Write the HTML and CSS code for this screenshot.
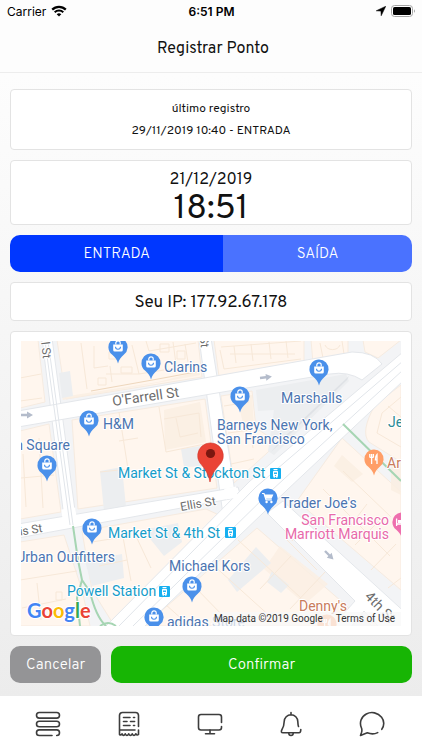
FILE: index.html
```
<!doctype html>
<html lang="pt-BR">
<head>
    <title>Registrar Ponto</title>
    <meta charset="utf-8"/>
    <meta name="viewport" content="width=device-width, initial-scale=1">
    <link rel="stylesheet" href="styles.css">
</head>
<body>
    <div class="statusbar">
        <div class="carrier">
            <span>Carrier</span>
            <svg width="16" height="12" viewBox="0 0 16 12">
                <path d="M1.2 4.6 A9.6 9.6 0 0 1 14.8 4.6" fill="none" stroke="#000" stroke-width="2.2"/>
                <path d="M3.7 7.2 A6.1 6.1 0 0 1 12.3 7.2" fill="none" stroke="#000" stroke-width="2"/>
                <path d="M5.7 9.3 A3.3 3.3 0 0 1 10.3 9.3 L8 11.6 Z"/>
            </svg>
        </div>
        <div class="clock">6:51 PM</div>
        <div class="power">
            <svg width="10" height="10" viewBox="0 0 10 10"><path d="M9.8 .2 L.2 4.8 L4.9 5.1 L5.2 9.8 Z" stroke="#000" stroke-width=".5"/></svg>
            <svg width="25" height="12" viewBox="0 0 25 12">
                <rect x=".5" y=".5" width="21" height="11" rx="3" fill="#fff" stroke="#a5a5a5"/>
                <rect x="2" y="2" width="18" height="8" rx="1.6"/>
                <path d="M23 4.2 q2 1.8 0 3.6 z" fill="#a5a5a5"/>
            </svg>
        </div>
    </div>
    <header class="header">
        <h1>Registrar Ponto</h1>
    </header>

    <main class="content">
        <section class="card last">
            <p>último registro</p>
            <p>29/11/2019 10:40 - ENTRADA</p>
        </section>
        <section class="card now">
            <p class="date">21/12/2019</p>
            <p class="time">18:51</p>
        </section>
        <div class="segment">
            <button type="button" class="on">ENTRADA</button>
            <button type="button">SAÍDA</button>
        </div>
        <section class="card ip">Seu IP: 177.92.67.178</section>
        <section class="card mapcard">
            <div class="map">
                <svg class="mapsvg" viewBox="21 341 380 285" preserveAspectRatio="xMidYMid slice">
                    <defs>
                        <path id="drop" d="M0 16.5 C-1 12.5 -3 10.5 -6 7.6 A9.6 9.6 0 1 1 6 7.6 C3 10.5 1 12.5 0 16.5 Z"/>
                        <g id="shop">
                            <use href="#drop" fill="#4a90ea"/>
                            <path d="M-4.8 -2.6 H4.8 V3 a1.6 1.6 0 0 1 -1.6 1.6 H-3.2 A1.6 1.6 0 0 1 -4.8 3 Z" fill="#fff"/>
                            <path d="M-2.2 -2.6 V-4 a2.2 2.2 0 0 1 4.4 0 V-2.6" fill="none" stroke="#fff" stroke-width="1.2"/>
                            <path d="M-2.5 -.2 a2.5 2.5 0 0 0 5 0" fill="none" stroke="#4a90ea" stroke-width="1.1"/>
                        </g>
                        <g id="food">
                            <use href="#drop" fill="#ff9e67"/>
                            <path d="M-4.2 -5 V-1.5 M-2.4 -5 V5 M-.6 -5 V-1.5 M-4.2 -1.6 H-.6 M3 5 V-4.6 Q1.2 -3 1.4 .8 H3" fill="none" stroke="#fff" stroke-width="1.3"/>
                        </g>
                        <g id="tram">
                            <rect width="11" height="11" rx="1" fill="#16aff0"/>
                            <rect x="3" y="2.8" width="5" height="6.2" rx="1" fill="#fff"/>
                            <path d="M3.5 1.5 H7.5 M3.8 10 L4.6 9 M7.2 10 L6.4 9" stroke="#fff" stroke-width="1"/>
                            <path d="M4 5.2 H7" stroke="#16aff0" stroke-width="1.4"/>
                            <circle cx="5.5" cy="7.6" r=".6" fill="#16aff0"/>
                        </g>
                        <path id="arrow" d="M0 -1.2 H6 V-3.4 L12 0 L6 3.4 V1.2 H0 Z" fill="#b4bccb"/>
                    </defs>
                    <rect x="21" y="341" width="380" height="285" fill="#f3f4f6"/>

                    <!-- city blocks -->
                    <g fill="#fff6ee" stroke="#f6ebe0" stroke-width="1">
                        <path d="M20 340 H38 L45 402 L20 408 Z"/>
                        <path d="M57 340 H198 L202 377 L66 399 Z"/>
                        <path d="M20 431 L49 424 L61 512 L20 519 Z"/>
                        <path d="M72 420 L205 399 L217 488 L78 509 Z"/>
                        <path d="M214 340 H304 V364 L219 376 Z"/>
                        <path d="M311 340 H348 V357 L313 363 Z"/>
                        <path d="M363 340 H401 L378 358 L365 352 Z"/>
                        <path d="M221 396 L252 391 L256 428 L278 443 L234 483 Z"/>
                        <path d="M20 542 L64 535 L82 590 L90 626 H20 Z"/>
                        <path d="M82 531 L206 509 L219 515 L112 622 L92 590 Z"/>
                        <path d="M401 385 L375 405 Q360 432 369 442 L401 462 Z"/>
                        <path d="M342 438 L401 492 V590 L297 501 Z"/>
                        <path d="M257 528 L349 608 L338 626 H144 Z"/>
                        <path d="M372 626 L362 616 L380 626 Z"/>
                    </g>
                    <g fill="#fbefe2" opacity=".8">
                        <path d="M62 397 L158 382 L200 371 V375 L63 400 Z"/>
                        <path d="M164 410 L200 402 L206 442 L165 450 Z"/>
                        <path d="M237 397 L252 395 L254 426 L244 428 Z"/>
                        <path d="M391 465 V490 L401 495 V461 Z"/>
                        <path d="M342 455 L363 474 L352 482 L334 466 Z"/>
                        <path d="M280 546 L328 584 L305 604 L264 569 Z"/>
                    </g>
                    <g fill="#eceef0">
                        <path d="M59 373 L70 371 L73 396 L62 398 Z"/>
                        <path d="M100 471 L122 467 L126 507 L104 511 Z"/>
                        <path d="M181 449 L207 445 L210 466 L184 467 Z"/>
                        <path d="M256 390 L346 374 L349 381 L274 455 L268 451 L274 410 L258 411 Z"/>
                        <path d="M143 530 L178 523 L182 542 L164 556 Z"/>
                        <path d="M85 561 L122 554 L124 578 L92 586 Z"/>
                        <path d="M256 547 L271 563 L237 592 L228 580 Z"/>
                        <path d="M272 571 L289 585 L281 593 L267 582 Z"/>
                    </g>
                    <!-- building outlines -->
                    <g fill="none" stroke="#f7e8d8" stroke-width="1">
                        <path d="M81 343 L87 389 M20 378 L41 374 M20 401 L42 398 M94 346 V368 L108 366 M106 374 H139 L164 370 L197 366 M110 366 L112 382 M132 345 L139 374 M146 341 L149 351 L196 343 M173 342 L176 364 M185 344 L188 362"/>
                        <path d="M160 344 h9 v8 h-9 z M177 351 h8 v8 h-8 z M109 352 h8 v7 h-8 z M121 367 h11 v6 h-11 z M98 378 h8 v7 h-8 z"/>
                        <path d="M119 412 L128 469 L100 472 M119 441 L138 438 M159 407 L166 452 L205 444 M164 419 L199 413 L201 437 M176 418 l4 19 l18 -4"/>
                        <path d="M221 347 L301 341 M220 350 L224 369 L301 359 M234 346 l2 17 M251 344 l2 17 M269 342 l2 17 M286 341 l2 17 M230 354 h65"/>
                        <path d="M320 343 L323 358 L344 354 L342 341 M325 345 a8 7 0 0 0 15 0"/>
                        <path d="M224 406 L249 402 M228 433 L250 430 L253 448 M231 464 L254 459"/>
                        <path d="M23 454 L26 507 M21 478 L54 475 M39 438 L43 508 M92 542 L123 537 L131 581 M99 566 L127 560 M134 532 L151 568"/>
                        <path d="M20 580 L77 571 M37 583 L41 620 M22 608 L66 599 M56 592 h6 v8 h-6 z"/>
                        <path d="M238 540 L301 598 M211 563 L273 619 M190 582 L228 621 M165 604 L184 621 M326 571 L290 609 M291 556 L260 589 M287 540 L317 570 M306 523 L292 541"/>
                        <path d="M343 471 L391 517 M323 489 L390 556 M367 504 L348 529 M380 520 L355 545 M396 544 L371 570 M401 578 L388 588"/>
                        <path d="M401 397 L382 413 L377 433 L401 447 M388 406 L401 417"/>
                    </g>
                    <path d="M91 391 L158 379 L201 371" fill="none" stroke="#eed7bd" stroke-width="1"/>

                    <!-- streets -->
                    <g fill="#fff" stroke="#e4e7eb" stroke-width="1">
                        <path d="M42 338 H52 L76 518 H64 Z"/>
                        <path d="M199 338 H211 L237 505 L223 515 Z"/>
                        <path d="M18 524 L238 487 L241 497 L18 538 Z"/>
                        <path d="M18 411 L312 359 L352 352 Q374 352 382 364 L362 380 Q348 371 330 374 L205 395 L18 427 Z"/>
                        <path d="M283 501 L267 513 L355 601 L331 628 H350 L364 611 L380 628 H410 V617 Z"/>
                        <path d="M403 352 L250 481 L104 628 H143 L287 490 L403 381 Z"/>
                    </g>
                    <path d="M18 419 L66 411 L205 387 L310 367 M62 515 L76 513 M225 494 L237 492" fill="none" stroke="#fff" stroke-width="11"/>
                    <g fill="none" stroke="#e1e5ea" stroke-width="1">
                        <path d="M45 341 L70 525 M48 341 L73 525"/>
                        <path d="M403 361 L256 487 L119 626 M403 370 L272 490 L133 626"/>
                    </g>
                    <path d="M349 376 L283 438 L271 452 L347 380 Z" fill="#dfe2e6"/>
                    <g fill="none" stroke="#a6d5b3" stroke-width="2">
                        <path d="M73 526 L78 560 L82 580 L77 598 L80 626 M82 580 L90 592 Q96 617 106 626 M100 626 Q108 620 116 626"/>
                        <path d="M343 424 L401 481"/>
                    </g>
                    <use href="#arrow" x="21" y="415"/>
                    <use href="#arrow" transform="translate(260 378) rotate(-7)"/>
                    <use href="#arrow" transform="translate(325 551) rotate(45)"/>

                    <g class="street">
                        <text class="main" transform="translate(113 406) rotate(-8)">O'Farrell St</text>
                        <text transform="translate(181 511) rotate(-10)">Ellis St</text>
                        <text transform="translate(43 532) rotate(-9)" text-anchor="end">Ellis St</text>
                        <text transform="translate(43 359) rotate(83)" text-anchor="end">Powell St</text>
                        <text transform="translate(201 348) rotate(83)" text-anchor="end">Stockton St</text>
                        <text class="main" transform="translate(364 597) rotate(46)">4th St</text>
                    </g>

                    <use href="#shop" x="118" y="347"/>
                    <use href="#shop" x="151" y="363"/>
                    <use href="#shop" x="89" y="420"/>
                    <use href="#shop" x="47" y="465"/>
                    <use href="#shop" x="319" y="369"/>
                    <use href="#shop" x="240" y="396"/>
                    <use href="#shop" x="92" y="528"/>
                    <use href="#shop" x="192" y="586"/>
                    <use href="#shop" x="154" y="617"/>
                    <use href="#food" x="374" y="459"/>
                    <use href="#food" x="327" y="624"/>
                    <g transform="translate(268 498)">
                        <use href="#drop" fill="#4a90ea"/>
                        <path d="M-6 -4.5 H-4 L-2 1.8 H3.8" fill="none" stroke="#fff" stroke-width="1.2"/>
                        <path d="M-3.8 -3.6 H5.4 L3.6 .8 H-2.4 Z" fill="#fff"/>
                        <circle cx="-1.4" cy="4" r="1.2" fill="#fff"/>
                        <circle cx="3.4" cy="4" r="1.2" fill="#fff"/>
                    </g>
                    <g transform="translate(402 522)">
                        <use href="#drop" fill="#ee6fae"/>
                        <path d="M-5.4 -3.5 V4 M-5.4 2 H6" stroke="#fff" stroke-width="1.3"/>
                        <path d="M-4 -2 H-1 V1 H-4 Z M0 -2.5 H6 V1 H0 Z" fill="#fff"/>
                    </g>

                    <g class="place">
                        <text x="164" y="372">Clarins</text>
                        <text x="103" y="429">H&amp;M</text>
                        <text x="70" y="450" text-anchor="end">Union Square</text>
                        <text x="281" y="403">Marshalls</text>
                        <text x="217" y="430">Barneys New York,</text>
                        <text x="217" y="444">San Francisco</text>
                        <text x="281" y="508">Trader Joe's</text>
                        <text x="115" y="562" text-anchor="end">Urban Outfitters</text>
                        <text x="169" y="571">Michael Kors</text>
                        <text x="167" y="627">adidas Store</text>
                        <text class="teal" x="388" y="427">Jessica</text>
                        <text class="brown" x="387" y="468">Arts Cafe</text>
                        <text class="brown" x="299" y="611">Denny's</text>
                        <text class="pink" x="389" y="525" text-anchor="end">San Francisco</text>
                        <text class="pink" x="389" y="539" text-anchor="end">Marriott Marquis</text>
                        <text class="transit" x="118" y="478">Market St &amp; Stockton St</text>
                        <text class="transit" x="108" y="538">Market St &amp; 4th St</text>
                        <text class="transit" x="67" y="596">Powell Station</text>
                    </g>
                    <use href="#tram" x="270" y="468"/>
                    <use href="#tram" x="225" y="527"/>
                    <use href="#tram" x="159" y="586"/>

                    <path d="M210 482 C208 472 204 468 200 463 A12.8 12.8 0 1 1 221 463 C217 468 212 472 210 482 Z" fill="#ea4335" stroke="#d0392d" stroke-width=".6"/>
                    <circle cx="210.500" cy="453.500" r="4.6" fill="#7a1710"/>

                    <text class="google" x="27" y="618"><tspan fill="#4285f4">G</tspan><tspan fill="#ea4335">o</tspan><tspan fill="#fbbc05">o</tspan><tspan fill="#4285f4">g</tspan><tspan fill="#34a853">l</tspan><tspan fill="#ea4335">e</tspan></text>
                </svg>
                <div class="credits">
                    <span>Map data ©2019 Google</span>
                    <a href="#">Terms of Use</a>
                </div>
            </div>
        </section>
        <div class="actions">
            <button type="button" class="cancel">Cancelar</button>
            <button type="button" class="confirm">Confirmar</button>
        </div>
    </main>

    <nav class="tabs">
        <a href="#" aria-label="Menu">
            <svg viewBox="0 0 26 26">
                <rect x="1.500" y="1.500" width="23" height="5.600" rx="2.800"/>
                <rect x="1.500" y="10.200" width="23" height="5.600" rx="2.800"/>
                <path d="M17 24.500 H4.300 A2.800 2.800 0 0 1 4.300 18.900 H21.700 A2.800 2.800 0 0 1 21.700 24.500"/>
            </svg>
        </a>
        <a href="#" aria-label="Recibos">
            <svg viewBox="0 0 26 26">
                <path d="M22.500 15.500 V4.500 A3 3 0 0 0 19.500 1.500 H6.500 A3 3 0 0 0 3.500 4.500 V23.500 Q5 24.600 6 22.800 Q7.500 26 9.200 22.800 Q11 26 12.700 22.800 Q14.500 26 16.200 22.800 Q18 26 19.700 22.800 Q21 24.800 22.500 23.500 V19"/>
                <path d="M4 19 H19 M7.500 6.500 H14 M7.500 10.500 H11 M7.500 14.500 H14 M17.500 6.500 H18.600 M14.500 10.500 H18.600 M17.500 14.500 H18.600"/>
            </svg>
        </a>
        <a href="#" aria-label="Computador">
            <svg viewBox="0 0 26 26">
                <path d="M24.500 11.500 V6 A2.500 2.500 0 0 0 22 3.500 H4 A2.500 2.500 0 0 0 1.500 6 V16.500 A2.500 2.500 0 0 0 4 19 H22 A2.500 2.500 0 0 0 24.500 16.500 V15.500"/>
                <path d="M13 19 V22.700 M8.500 22.700 H17.500"/>
            </svg>
        </a>
        <a href="#" aria-label="Notificações">
            <svg viewBox="0 0 26 26">
                <path d="M13 1.500 V4 M20.500 15.500 C19.800 13.500 20 12 19.800 10.500 A6.800 6.800 0 0 0 6.200 10.500 C6 15 5.500 16.500 4 18.500 C2.800 20.500 3.300 21.800 5 21.800 H21 C22.400 21.800 22.800 20.500 22.800 18.500"/>
                <path d="M10.800 22.300 a2.200 2.200 0 0 0 4.400 0"/>
            </svg>
        </a>
        <a href="#" aria-label="Mensagens">
            <svg viewBox="0 0 26 26">
                <path d="M22.800 18.300 C25.600 14.600 25.200 9.500 22.600 6.200 C19 1.700 12.500 .2 7.300 3 C2 5.800 .2 11.700 2.400 16.700 C3.200 18.600 3 20 2.500 21.600 L1.500 24.500 L8.300 21.800 C11.800 23.200 15.500 23.200 18.700 21.600"/>
            </svg>
        </a>
    </nav>
</body>
</html>
```

FILE: styles.css
```
* {
    box-sizing: border-box;
}
body {
    margin: 0;
    min-height: 100vh;
    display: flex;
    flex-direction: column;
    background: linear-gradient(#fdfdfd 10%, #ececec 93%);
    font-family: Overpass, "Noto Sans", sans-serif;
    font-size: 14px;
    color: #111;
}
h1, p {
    margin: 0;
    font-weight: normal;
}
button {
    border: 0;
    padding: 2px 16px 0;
    height: 37px;
    font-family: inherit;
    font-size: 15px;
    font-weight: 300;
    color: white;
    cursor: pointer;
}
.statusbar {
    display: grid;
    grid-template-columns: 1fr auto 1fr;
    align-items: center;
    height: 22px;
    padding: 0 6px 0 7px;
    font-family: Inter, sans-serif;
    font-size: 12px;
    color: black;
}
.carrier, .power {
    display: flex;
    align-items: center;
    gap: 5px;
}
.power {
    justify-content: flex-end;
}
.clock {
    font-weight: 600;
}
.header {
    display: flex;
    align-items: center;
    justify-content: center;
    height: 51px;
    padding: 4px 0 0 4px;
    border-bottom: 1px solid #ededed;
}
.header h1 {
    font-size: 16px;
}
.content {
    flex: 1;
    display: flex;
    flex-direction: column;
    gap: 10px;
    padding: 16px 10px 13px;
}
.card {
    background-color: white;
    border: 1px solid #e3e3e3;
    border-radius: 4px;
    text-align: center;
}
.last {
    padding: 8px 8px 7px;
    font-size: 12px;
    line-height: 22px;
}
.now {
    padding: 7px 8px 0;
}
.date {
    font-size: 16px;
    line-height: 24px;
}
.time {
    margin-bottom: -4px;
    font-size: 34px;
    line-height: 36px;
}
.segment {
    display: flex;
    border-radius: 10px;
    overflow: hidden;
}
.segment button {
    flex: 1 1 auto;
    background-color: #4a72ff;
}
.segment .on {
    background-color: #0037ff;
}
.ip {
    padding-top: 3px;
    font-size: 17px;
    line-height: 34px;
}
.mapcard {
    padding: 9px 10px;
}
.map {
    position: relative;
    overflow: hidden;
}
.mapsvg {
    display: block;
    width: 100%;
    font-family: Roboto, sans-serif;
}
.mapsvg text {
    paint-order: stroke;
    stroke: white;
    stroke-width: 2px;
    stroke-linejoin: round;
}
.place {
    font-size: 14px;
    fill: #4b74b0;
}
.place .transit {
    fill: #159cc9;
}
.place .teal {
    fill: #2b8a94;
}
.place .brown {
    fill: #c97b5b;
}
.place .pink {
    fill: #e86aaa;
}
.street {
    font-size: 12px;
    fill: #6d6d6d;
}
.street .main {
    font-size: 14px;
}
.mapsvg .google {
    font-family: Lato, sans-serif;
    font-size: 20px;
    font-weight: bold;
}
.credits {
    position: absolute;
    right: 0;
    bottom: 0;
    display: flex;
    gap: 13px;
    padding: 0 6px 0 2px;
    background-color: rgba(248, 248, 248, 0.75);
    font-family: Roboto, sans-serif;
    font-size: 10px;
    line-height: 14px;
    color: #333;
}
.credits a {
    color: #333;
    text-decoration: none;
}
.actions {
    display: flex;
    gap: 10px;
}
.actions button {
    border-radius: 10px;
}
.cancel {
    background-color: #949496;
}
.actions .confirm {
    flex: 1;
    background-color: #17b504;
}
.tabs {
    display: flex;
    height: 56px;
    padding: 0 9px 0 7px;
    background-color: white;
}
.tabs a {
    flex: 1;
    display: flex;
    align-items: center;
    justify-content: center;
}
.tabs svg {
    width: 26px;
    height: 26px;
    fill: none;
    stroke: #3d3d3d;
    stroke-width: 1.6;
    stroke-linecap: round;
    stroke-linejoin: round;
}
```
